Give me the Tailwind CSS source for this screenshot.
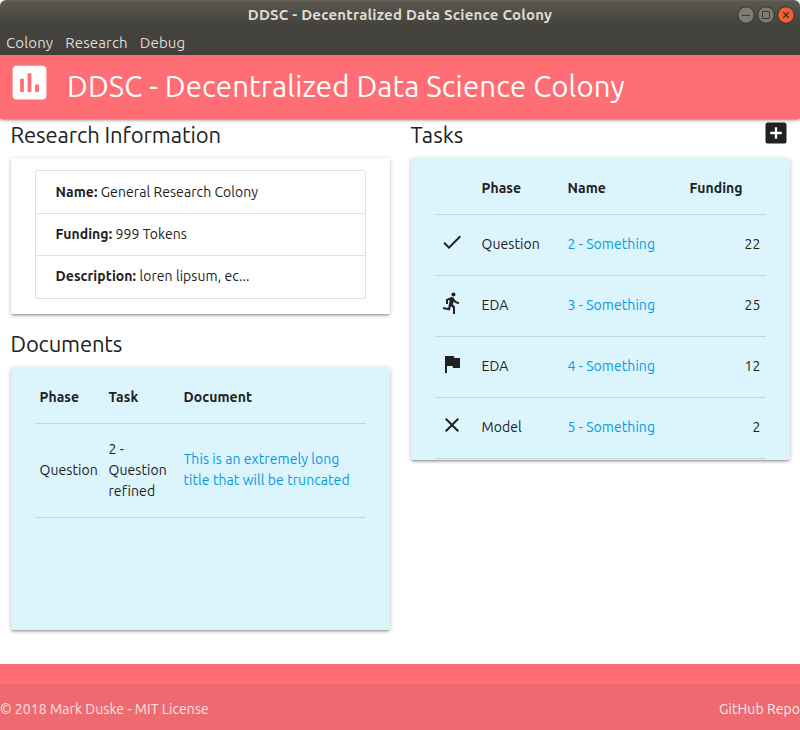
<!DOCTYPE html>
<html lang="en">
<head>
<meta charset="utf-8">
<title>DDSC - Decentralized Data Science Colony</title>
<script src="https://cdn.jsdelivr.net/npm/@tailwindcss/browser@4"></script>
</head>
<body class="bg-white">
<div class="flex h-[730px] w-[800px] flex-col overflow-hidden font-['Ubuntu','Noto_Sans',sans-serif] text-[14px] leading-[21px] tracking-[0.07px] text-[#212121]">
  <div class="relative flex h-[30px] shrink-0 items-center justify-center rounded-t-[6px] border-t border-[#66645a] bg-gradient-to-b from-[#5a584e] to-[#403f3a] pb-[2px]">
    <span class="text-[15px] font-bold tracking-[0.21px] text-[#dfdbd2]">DDSC - Decentralized Data Science Colony</span>
    <div class="absolute right-[5px] top-[5px] flex gap-[2px]">
      <svg width="18" height="18" viewBox="0 0 18 18" fill="none"><circle cx="9" cy="9" r="8.2" fill="#7d7b74" stroke="#35342f"/><path d="M5 9.5h8" stroke="#3c3b37"/></svg>
      <svg width="18" height="18" viewBox="0 0 18 18" fill="none"><circle cx="9" cy="9" r="8.2" fill="#7d7b74" stroke="#35342f"/><path d="M5.5 5.5h7v7h-7z" stroke="#3c3b37"/></svg>
      <svg width="18" height="18" viewBox="0 0 18 18" fill="none"><circle cx="9" cy="9" r="8.2" fill="#ee6137" stroke="#35342f"/><path d="M6.200 6.200l5.600 5.600m0-5.600l-5.600 5.600" stroke="#3c2018" stroke-width="1.2"/></svg>
    </div>
  </div>
  <nav class="flex h-[25px] shrink-0 items-center gap-[12px] bg-[#43423d] pl-[6px] text-[15px] tracking-[0.15px] text-[#dfdbd2]">
    <span>Colony</span><span>Research</span><span>Debug</span>
  </nav>
  <header class="z-10 flex h-[64px] shrink-0 bg-[#fe6e74] pl-[7px] text-white shadow-[0_2px_2px_0_rgba(0,0,0,0.14),0_3px_1px_-2px_rgba(0,0,0,0.12),0_1px_5px_0_rgba(0,0,0,0.2)]">
    <svg class="mt-[5px]" width="45" height="45" viewBox="0 0 24 24" fill="currentColor"><path d="M19 3H5c-1.100 0-2 .9-2 2v14c0 1.100.9 2 2 2h14c1.100 0 2-.9 2-2V5c0-1.100-.9-2-2-2zM9 17H7v-7h2v7zm4 0h-2V7h2v10zm4 0h-2v-4h2v4z"/></svg>
    <h1 class="ml-[15px] whitespace-nowrap text-[29.400px] leading-[64px] tracking-[0.14px]">DDSC - Decentralized Data Science Colony</h1>
  </header>
  <main class="grid h-[545px] shrink-0 grid-cols-2">
    <section class="px-[10.500px]">
      <h2 class="h-[38.500px] text-[22px] leading-[32px] tracking-[-0.1px]">Research Information</h2>
      <div class="h-[156.500px] rounded-[2px] px-6 pt-[12.500px] shadow-[0_2px_2px_0_rgba(0,0,0,0.14),0_3px_1px_-2px_rgba(0,0,0,0.12),0_1px_5px_0_rgba(0,0,0,0.2)]">
        <ul class="divide-y divide-[#e0e0e0] rounded-[2px] border border-[#e0e0e0]">
          <li class="h-[43px] pl-[20px] leading-[42px]"><b>Name:</b> General Research Colony</li>
          <li class="h-[42px] pl-[20px] leading-[41px]"><b>Funding:</b> 999 Tokens</li>
          <li class="h-[42px] pl-[20px] leading-[41px]"><b>Description:</b> loren lipsum, ec...</li>
        </ul>
      </div>
      <h2 class="mt-[14px] h-[38.500px] text-[22px] leading-[32px] tracking-[-0.15px]">Documents</h2>
      <div class="h-[263.500px] rounded-[2px] bg-[#dcf4fc] px-6 pt-[5.500px] shadow-[0_2px_2px_0_rgba(0,0,0,0.14),0_3px_1px_-2px_rgba(0,0,0,0.12),0_1px_5px_0_rgba(0,0,0,0.2)]">
        <div class="grid h-[52px] grid-cols-[69px_75px_1fr] items-center border-b border-[#c0d5dc] pl-[5px] font-bold"><span>Phase</span><span>Task</span><span>Document</span></div>
        <div class="grid h-[94px] grid-cols-[69px_75px_1fr] items-center border-b border-[#c0d5dc] pl-[5px]"><span>Question</span><span>2 -<br>Question<br>refined</span><a class="pb-[2px] text-[#039be5]">This is an extremely long<br>title that will be truncated</a></div>
      </div>
    </section>
    <section class="px-[10.500px]">
      <div class="flex h-[38.500px] justify-between">
        <h2 class="text-[22px] leading-[32px] tracking-normal">Tasks</h2>
        <svg width="28" height="28" viewBox="0 0 24 24" fill="currentColor"><path d="M19 3H5c-1.110 0-2 .9-2 2v14c0 1.100.89 2 2 2h14c1.100 0 2-.9 2-2V5c0-1.100-.9-2-2-2zm-2 10h-4v4h-2v-4H7v-2h4V7h2v4h4v2z"/></svg>
      </div>
      <div class="h-[302.500px] rounded-[2px] bg-[#dcf4fc] px-6 pt-[4.500px] shadow-[0_2px_2px_0_rgba(0,0,0,0.14),0_3px_1px_-2px_rgba(0,0,0,0.12),0_1px_5px_0_rgba(0,0,0,0.2)]">
        <div class="grid h-[53px] grid-cols-[42px_86px_122px_1fr] items-center border-b border-[#c0d5dc] px-[5px] font-bold"><span></span><span>Phase</span><span>Name</span><span>Funding</span></div>
        <div class="grid h-[61px] grid-cols-[42px_86px_1fr_auto] items-center border-b border-[#c0d5dc] px-[5px] pb-[2px]">
          <svg class="mb-[5px]" width="24" height="24" viewBox="0 0 24 24" fill="currentColor"><path d="M9 16.170L4.830 12l-1.420 1.410L9 19 21 7l-1.410-1.410z"/></svg><span>Question</span><a class="text-[#039be5]">2 - Something</a><span>22</span>
        </div>
        <div class="grid h-[61px] grid-cols-[42px_86px_1fr_auto] items-center border-b border-[#c0d5dc] px-[5px] pb-[2px]">
          <svg class="mb-[5px]" width="24" height="24" viewBox="0 0 24 24" fill="currentColor"><path d="M13.490 5.480c1.100 0 2-.9 2-2s-.9-2-2-2-2 .9-2 2 .9 2 2 2zm-3.600 13.900l1-4.400 2.100 2v6h2v-7.500l-2.100-2 .6-3c1.300 1.500 3.300 2.500 5.500 2.500v-2c-1.900 0-3.500-1-4.300-2.400l-1-1.600c-.4-.6-1-1-1.700-1-.3 0-.5.1-.8.1l-5.200 2.200v4.700h2v-3.400l1.800-.7-1.600 8.100-4.900-1-.4 2 7 1.400z"/></svg><span>EDA</span><a class="text-[#039be5]">3 - Something</a><span>25</span>
        </div>
        <div class="grid h-[61px] grid-cols-[42px_86px_1fr_auto] items-center border-b border-[#c0d5dc] px-[5px] pb-[2px]">
          <svg class="mb-[5px]" width="24" height="24" viewBox="0 0 24 24" fill="currentColor"><path d="M14.400 6L14 4H5v17h2v-7h5.600l.4 2h7V6z"/></svg><span>EDA</span><a class="text-[#039be5]">4 - Something</a><span>12</span>
        </div>
        <div class="grid h-[61px] grid-cols-[42px_86px_1fr_auto] items-center border-b border-[#c0d5dc] px-[5px] pb-[2px]">
          <svg class="mb-[5px]" width="24" height="24" viewBox="0 0 24 24" fill="currentColor"><path d="M19 6.410L17.590 5 12 10.590 6.410 5 5 6.410 10.590 12 5 17.590 6.410 19 12 13.410 17.590 19 19 17.590 13.410 12z"/></svg><span>Model</span><a class="text-[#039be5]">5 - Something</a><span>2</span>
        </div>
      </div>
    </section>
  </main>
  <footer class="h-[66px] shrink-0 bg-[#fe6e74] pt-[20px]">
    <div class="flex h-[46px] items-center justify-between bg-[#ec6a70] pt-[5px] text-white/80"><span>© 2018 Mark Duske - MIT License</span><a class="text-[#fbe9e9]">GitHub Repo</a></div>
  </footer>
</div>
</body>
</html>
